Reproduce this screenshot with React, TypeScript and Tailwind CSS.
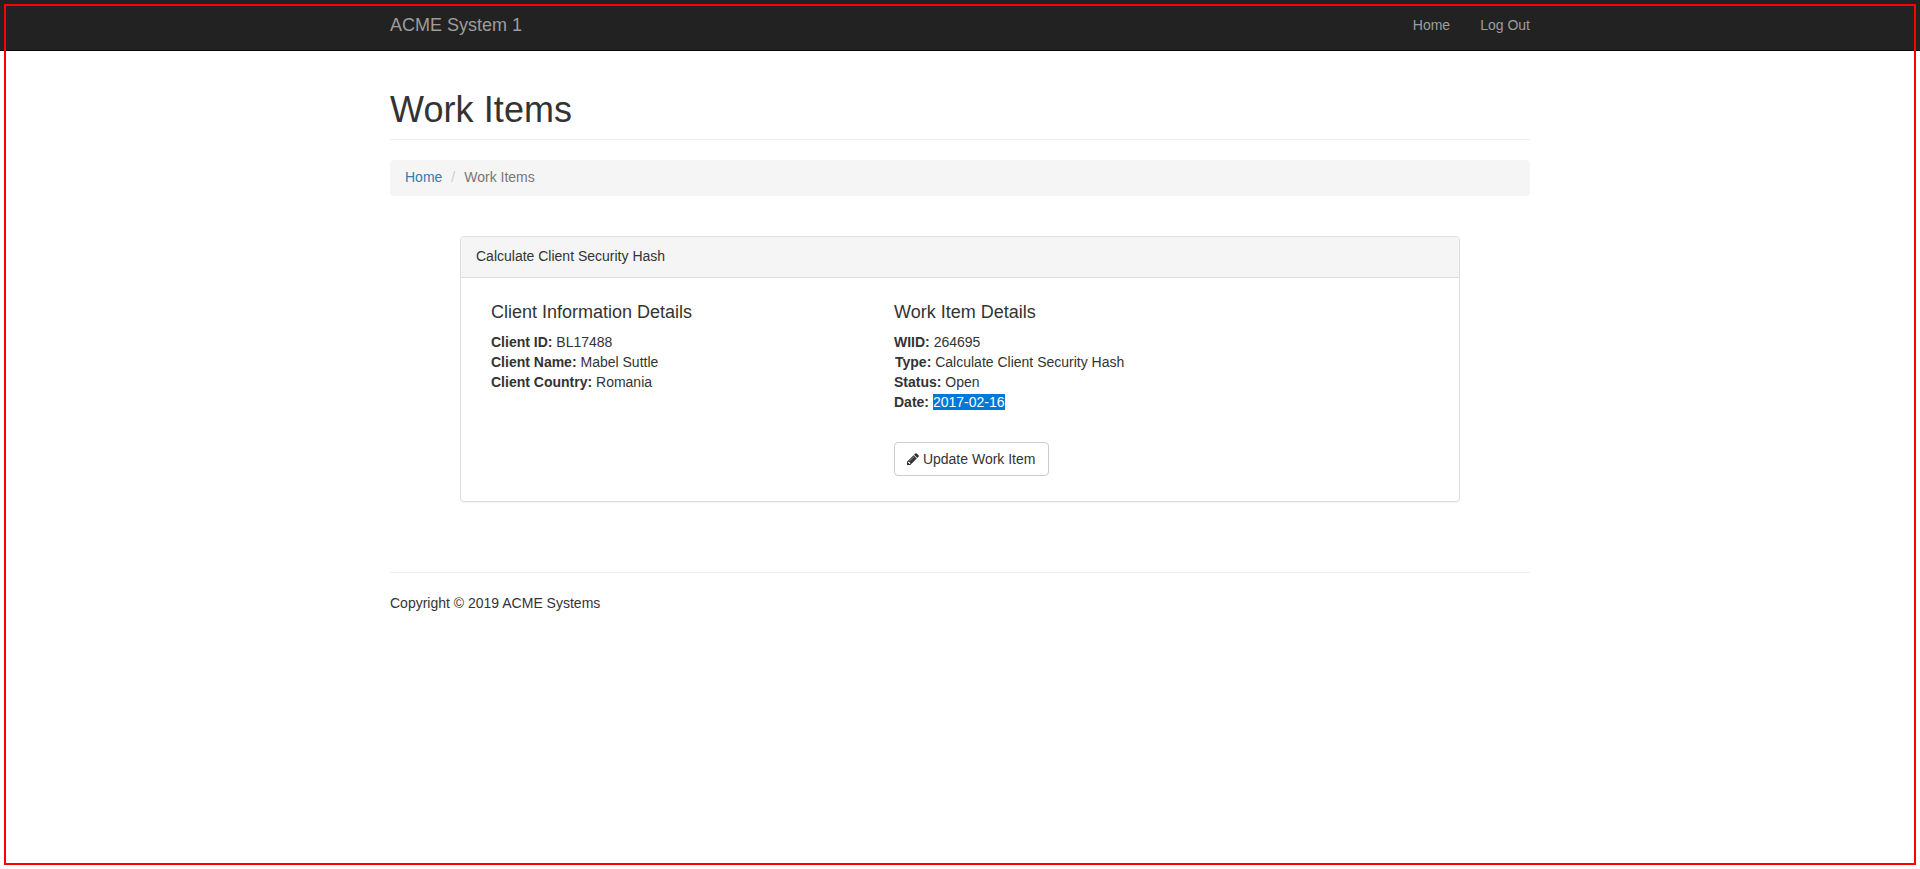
import React from "react";

function PencilIcon() {
  return (
    <svg viewBox="128 0 1536 1792" className="inline-block h-[14px] w-[12px] align-[-2px]" fill="currentColor" aria-hidden="true">
      <path d="M491 1536l91-91-235-235-91 91v107h128v128h107zm523-928q0-22-22-22-10 0-17 7l-542 542q-7 7-7 17 0 22 22 22 10 0 17-7l542-542q7-7 7-17zm-54-192l416 416-832 832h-416v-416zm683 96q0 53-37 90l-166 166-416-416 166-165q36-38 90-38 53 0 91 38l235 234q37 39 37 91z" />
    </svg>
  );
}

function Field({ label, className, children }: { label: string; className?: string; children: React.ReactNode }) {
  return (
    <p className={className}>
      <b className="font-bold">{label}:</b> {children}
    </p>
  );
}

export default function App() {
  return (
    <div className="relative h-[869px] overflow-hidden bg-white font-['Liberation_Sans',Arial,sans-serif] text-[14px] leading-5 text-[#333]">
      <nav className="h-[51px] border-b border-[#080808] bg-[#222] text-[#9d9d9d]">
        <div className="mx-auto flex h-[50px] w-[1140px] items-center justify-between">
          <a className="text-[18px]">ACME System 1</a>
          <div className="flex gap-[30px]">
            <a>Home</a>
            <a>Log Out</a>
          </div>
        </div>
      </nav>

      <main className="mx-auto w-[1140px]">
        <h1 className="mt-[39px] border-b border-[#eee] pb-[9px] text-[36px] leading-[40px] font-normal tracking-[0.08px]">Work Items</h1>

        <div className="mt-5 flex h-[35.5px] items-start rounded-[4px] bg-[#f5f5f5] px-[15px] pt-[7px]">
          <a className="text-[#337ab7]">Home</a>
          <span className="px-[9px] text-[#ccc]">/</span>
          <span className="text-[#777]">Work Items</span>
        </div>

        <section className="mx-auto mt-[40.5px] h-[266px] w-[1000px] rounded-[4px] border border-[#ddd] shadow-[0_1px_1px_rgba(0,0,0,0.05)]">
          <div className="h-[41px] rounded-t-[3px] border-b border-[#ddd] bg-[#f5f5f5] px-[15px] py-[9px]">
            Calculate Client Security Hash
          </div>
          <div className="flex px-[30px] pt-6">
            <div className="w-[403px]">
              <h4 className="mb-[10px] text-[18px] leading-5">Client Information Details</h4>
              <Field label="Client ID">BL17488</Field>
              <Field label="Client Name">Mabel Suttle</Field>
              <Field label="Client Country">Romania</Field>
            </div>
            <div>
              <h4 className="mb-[10px] text-[18px] leading-5">Work Item Details</h4>
              <Field label="WIID">264695</Field>
              <Field label="Type" className="pl-px">Calculate Client Security Hash</Field>
              <Field label="Status">Open</Field>
              <Field label="Date">
                <span className="bg-[#0078d7] text-white">2017-02-16</span>
              </Field>
              <button className="mt-[30px] block h-[34px] w-[155px] rounded-[4px] border border-[#ccc] bg-white pl-3 py-[6px] text-left whitespace-nowrap">
                <PencilIcon /> Update Work Item
              </button>
            </div>
          </div>
        </section>

        <footer className="mt-[70px] border-t border-[#eee] pt-5">Copyright © 2019 ACME Systems</footer>
      </main>

      <div className="pointer-events-none absolute top-1 right-1 bottom-1 left-1 border-2 border-[#f00]" />
    </div>
  );
}
